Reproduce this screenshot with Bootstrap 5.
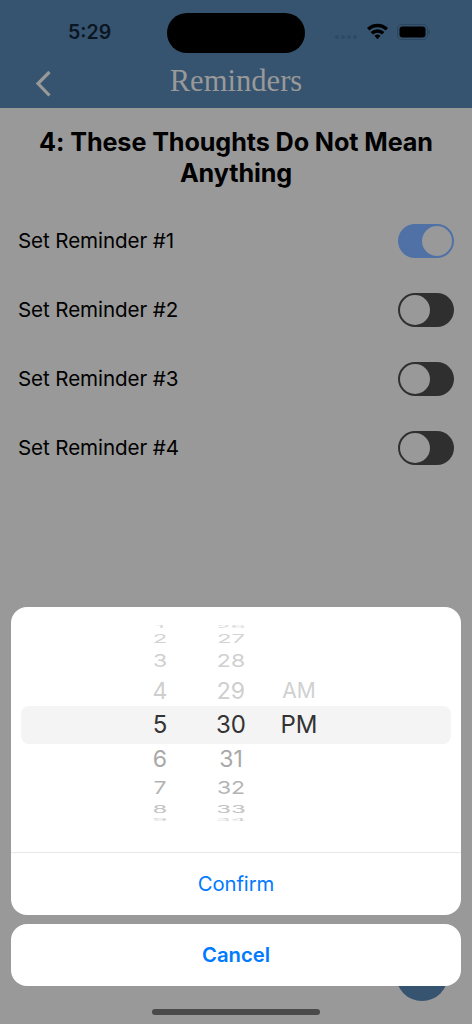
<!DOCTYPE html>
<html lang="en">
<head>
<meta charset="utf-8">
<title>Reminders</title>
<link href="https://cdn.jsdelivr.net/npm/bootstrap@5.3.0/dist/css/bootstrap.min.css" rel="stylesheet">
<style>
html,body{margin:0;height:1024px;overflow:hidden}
body{background:#999;font-family:Inter,"Liberation Sans",sans-serif;color:#000}
.phone{width:472px;height:1024px;position:relative;overflow:hidden;background:#999}
.topbar{height:108px;background:#36536f}
.statusline{height:64px;padding:0 40px 0 68px}
.clock{font-size:19.5px;font-weight:600;color:#0a1622;line-height:1;margin-top:1px}
.island{position:absolute;left:167px;top:13px;width:138px;height:40px;border-radius:20px;background:#000}
.navline{height:44px;position:relative}
.navtitle{font-family:"Liberation Serif",serif;font-size:30.6px;line-height:34px;color:#999}
.backbtn{position:absolute;left:34px;top:5px}
.lesson{font-size:25.2px;line-height:31px;font-weight:700;text-align:center;padding:19px 30px 0;margin:0;letter-spacing:-.1px}
.rem-list{padding:17px 18px 0;margin:0;list-style:none}
.rem-row{height:69px;font-size:20.6px;letter-spacing:-.1px}
.rem-label{padding-top:2px}
.tog{width:56px;height:34px;border-radius:17px;background:#2f2f2f;padding:2px;display:flex;justify-content:flex-start}
.tog.on{background:#4f71a6;justify-content:flex-end}
.tog i{display:block;width:30px;height:30px;border-radius:50%;background:#999}
.fab{position:absolute;left:396px;top:949px;width:52px;height:52px;border-radius:50%;background:#36536f}
.sheet{position:absolute;left:11px;right:11px;top:607px;display:flex;flex-direction:column;gap:9px}
.panel{background:#fff;border-radius:16px;overflow:hidden}
.pick{height:245px;position:relative;padding-top:17px}
.band{position:absolute;left:10px;right:10px;top:99px;height:38px;background:#f4f4f4;border-radius:8px}
.wheel{position:relative;height:198px;overflow:hidden}
.wcol{position:absolute;top:0;display:flex;flex-direction:column;align-items:center;width:70px}
.c1{left:114px}.c2{left:185px}.c3{left:253px}
.wcol span{display:block;width:100%;text-align:center;font-size:24px;overflow:visible;white-space:nowrap}
.act{display:block;width:100%;border:0;color:#007aff;text-align:center;font-size:20.3px;padding:0}
.act.one{height:63px;background:transparent;border-top:1px solid #e8e8e8;letter-spacing:-.1px}
.act.two{height:62px;background:#fff;font-weight:600}
.homebar{position:absolute;left:152px;top:1009px;width:168px;height:6px;border-radius:3px;background:#4a4a4a}
</style>
</head>
<body>
<div class="phone">
  <header class="topbar">
    <div class="statusline d-flex align-items-center justify-content-between">
      <span class="clock">5:29</span>
      <svg width="100" height="20" viewBox="0 0 100 20">
        <g fill="#2f4a64"><circle cx="5" cy="15" r="2"/><circle cx="11" cy="15" r="2"/><circle cx="17" cy="15" r="2"/><circle cx="23" cy="15" r="2"/></g>
        <path d="M35 6 A15 15 0 0 1 56 6 L53.7 8.6 A11.5 11.5 0 0 0 37.3 8.6 Z M38.6 9.9 A10 10 0 0 1 52.4 9.9 L50 12.5 A6.5 6.5 0 0 0 41 12.5 Z M42.5 13.8 A4.5 4.5 0 0 1 48.5 13.8 L45.5 17.2 Z" fill="#000"/>
        <rect x="65.5" y="2.5" width="30" height="15" rx="4.5" fill="none" stroke="#2b455e"/>
        <rect x="67.5" y="4.6" width="26" height="10.8" rx="3" fill="#000"/>
        <rect x="96.5" y="8" width="1.5" height="4" rx=".7" fill="#2b455e"/>
      </svg>
    </div>
    <div class="island"></div>
    <div class="navline d-flex justify-content-center">
      <svg class="backbtn" width="20" height="30" viewBox="0 0 20 30"><path d="M15.5 3 L4 14.5 L15.5 26.5" fill="none" stroke="#999" stroke-width="3.2"/></svg>
      <div class="navtitle">Reminders</div>
    </div>
  </header>
  <h1 class="lesson">4: These Thoughts Do Not Mean Anything</h1>
  <ul class="rem-list">
    <li class="rem-row d-flex align-items-center justify-content-between"><span class="rem-label">Set Reminder #1</span><span class="tog on"><i></i></span></li>
    <li class="rem-row d-flex align-items-center justify-content-between"><span class="rem-label">Set Reminder #2</span><span class="tog"><i></i></span></li>
    <li class="rem-row d-flex align-items-center justify-content-between"><span class="rem-label">Set Reminder #3</span><span class="tog"><i></i></span></li>
    <li class="rem-row d-flex align-items-center justify-content-between"><span class="rem-label">Set Reminder #4</span><span class="tog"><i></i></span></li>
  </ul>
  <div class="fab"></div>
  <div class="sheet">
    <div class="panel">
      <div class="pick">
        <div class="band"></div>
        <div class="wheel">
          <div class="wcol c1">
            <span style="height:6px;line-height:6px;transform:scaleY(.12);color:#d8d8d8">1</span>
            <span style="height:18px;line-height:18px;transform:scaleY(.5);color:#d4d4d4">2</span>
            <span style="height:27px;line-height:27px;transform:scaleY(.78);color:#d0d0d0;font-size:23px">3</span>
            <span style="height:32px;line-height:32px;color:#cecece;font-size:23px">4</span>
            <span style="height:36px;line-height:36px;color:#333">5</span>
            <span style="height:32px;line-height:32px;color:#a8a8a8;font-size:23px">6</span>
            <span style="height:26px;line-height:26px;transform:scaleY(.78);color:#b4b4b4;font-size:23px">7</span>
            <span style="height:16px;line-height:16px;transform:scaleY(.45);color:#c4c4c4">8</span>
            <span style="height:5px;line-height:5px;transform:scaleY(.12);color:#d0d0d0">9</span>
          </div>
          <div class="wcol c2">
            <span style="height:6px;line-height:6px;transform:scaleY(.12);color:#d8d8d8">26</span>
            <span style="height:18px;line-height:18px;transform:scaleY(.5);color:#d4d4d4">27</span>
            <span style="height:27px;line-height:27px;transform:scaleY(.78);color:#d0d0d0;font-size:23px">28</span>
            <span style="height:32px;line-height:32px;color:#cecece;font-size:23px">29</span>
            <span style="height:36px;line-height:36px;color:#333">30</span>
            <span style="height:32px;line-height:32px;color:#a8a8a8;font-size:23px">31</span>
            <span style="height:26px;line-height:26px;transform:scaleY(.78);color:#b4b4b4;font-size:23px">32</span>
            <span style="height:16px;line-height:16px;transform:scaleY(.45);color:#c4c4c4">33</span>
            <span style="height:5px;line-height:5px;transform:scaleY(.12);color:#d0d0d0">34</span>
          </div>
          <div class="wcol c3">
            <span style="height:6px"></span>
            <span style="height:18px"></span>
            <span style="height:27px"></span>
            <span style="height:32px;line-height:32px;color:#d0d0d0;font-size:21px">AM</span>
            <span style="height:36px;line-height:36px;color:#333">PM</span>
          </div>
        </div>
      </div>
      <button type="button" class="act one">Confirm</button>
    </div>
    <button type="button" class="act two panel">Cancel</button>
  </div>
  <div class="homebar"></div>
</div>
<script src="https://cdn.jsdelivr.net/npm/bootstrap@5.3.0/dist/js/bootstrap.bundle.min.js"></script>
</body>
</html>
